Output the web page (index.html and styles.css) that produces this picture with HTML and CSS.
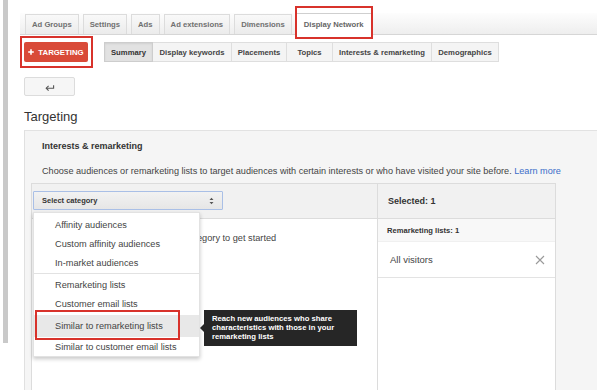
FILE: index.html
```html
<!DOCTYPE html>
<html>
<head>
<meta charset="utf-8">
<link rel="stylesheet" href="styles.css">
</head>
<body>
<div class="app">
  <div class="rail"></div>
  <div class="main">
    <div class="tabstrip">
      <div class="tab">Ad Groups</div>
      <div class="tab">Settings</div>
      <div class="tab">Ads</div>
      <div class="tab">Ad extensions</div>
      <div class="tab">Dimensions</div>
      <div class="tab active marked">Display Network</div>
    </div>
    <div class="toolbar">
      <div class="btn-target marked"><svg class="plus" width="6" height="6" viewBox="0 0 6 6"><path d="M3 0.2 V5.8 M0.2 3 H5.8" stroke="#fff" stroke-width="1.6"/></svg>TARGETING</div>
      <div class="subtabs">
        <div class="subtab active">Summary</div>
        <div class="subtab">Display keywords</div>
        <div class="subtab">Placements</div>
        <div class="subtab">Topics</div>
        <div class="subtab">Interests &amp; remarketing</div>
        <div class="subtab">Demographics</div>
      </div>
    </div>
    <div class="back-btn">
      <svg width="10" height="8" viewBox="0 0 10 8"><path d="M1.2 5.2 H8.6 V2.2" fill="none" stroke="#555" stroke-width="1.1"/><path d="M3.6 2.8 L1.2 5.2 L3.6 7.6" fill="none" stroke="#555" stroke-width="1.1"/></svg>
    </div>
    <h1 class="page-title">Targeting</h1>
    <div class="panel">
      <div class="panel-title">Interests &amp; remarketing</div>
      <div class="panel-desc">Choose audiences or remarketing lists to target audiences with certain interests or who have visited your site before. <span class="link">Learn more</span></div>
      <div class="picker">
        <div class="picker-left">
          <div class="col-head">
            <div class="select">
              <span>Select category</span>
              <svg width="5" height="8" viewBox="0 0 5 8"><path d="M0.5 3 L2.5 0.8 L4.5 3 Z M0.5 5 L2.5 7.2 L4.5 5 Z" fill="#555"/></svg>
            </div>
          </div>
          <div class="left-body">Select a category to get started</div>
          <div class="menu">
            <div class="menu-group">
              <div class="menu-item">Affinity audiences</div>
              <div class="menu-item">Custom affinity audiences</div>
              <div class="menu-item">In-market audiences</div>
            </div>
            <div class="menu-group">
              <div class="menu-item">Remarketing lists</div>
              <div class="menu-item">Customer email lists</div>
              <div class="menu-item hover marked">Similar to remarketing lists</div>
              <div class="menu-item">Similar to customer email lists</div>
            </div>
          </div>
          <div class="tooltip">Reach new audiences who share<br>characteristics with those in your<br>remarketing lists</div>
        </div>
        <div class="picker-right">
          <div class="col-head right-head">Selected: 1</div>
          <div class="group-row">Remarketing lists: 1</div>
          <div class="sel-row">
            <span>All visitors</span>
            <svg width="10" height="10" viewBox="0 0 10 10"><path d="M1 1 L9 9 M9 1 L1 9" stroke="#9a9a9a" stroke-width="1.1"/></svg>
          </div>
        </div>
      </div>
    </div>
  </div>
</div>
</body>
</html>
```

FILE: styles.css
```css
* { box-sizing: border-box; }
html, body { margin: 0; padding: 0; }
body {
  width: 600px;
  height: 390px;
  overflow: hidden;
  background: #fff;
  font-family: "Liberation Sans", Arial, sans-serif;
  color: #333;
}
.app { display: flex; height: 390px; }
.rail { flex: none; width: 5px; height: 343px; margin-left: 3px; background: #c9c9c9; }
.main { flex: 1; margin-left: 12px; margin-right: 3px; display: flex; flex-direction: column; }

.marked { position: relative; }
.marked::after {
  content: "";
  position: absolute;
  border: 2px solid #d8322b;
  pointer-events: none;
}

/* top tabs */
.tabstrip {
  margin-top: 13px;
  height: 22px;
  display: flex;
  align-items: flex-end;
  gap: 4px;
  padding-left: 5px;
  border-bottom: 1px solid #d6d6d6;
  background: linear-gradient(#fdfdfd, #eeeeee);
}
.tab {
  height: 20px;
  padding: 0 6px;
  display: flex;
  align-items: center;
  border: 1px solid #dcdcdc;
  border-bottom: none;
  background: linear-gradient(#f9f9f9, #ebebeb);
  font-size: 7.7px;
  font-weight: bold;
  color: #707070;
}
.tab.active {
  height: 22px;
  margin-bottom: -1px;
  padding: 0 7px;
  background: #fff;
  border-color: #cfcfcf;
  color: #666;
}
.tab.active::after { top: -8px; left: -2px; right: -2px; bottom: -4px; }

/* toolbar */
.toolbar { display: flex; align-items: center; margin-top: 7px; padding-left: 4px; height: 20px; }
.btn-target {
  width: 64px;
  height: 20px;
  display: flex;
  align-items: center;
  justify-content: center;
  background: #d94a38;
  border-radius: 2px;
  color: #fff;
  font-size: 7.8px;
  font-weight: bold;
}
.plus { margin-right: 4px; flex: none; }
.btn-target::after { top: -6px; left: -4px; right: -5px; bottom: -6px; }
.subtabs { display: flex; margin-left: 16px; }
.subtab {
  height: 20px;
  display: flex;
  align-items: center;
  justify-content: center;
  border: 1px solid #dedede;
  border-left: none;
  background: #f4f4f4;
  font-size: 7.7px;
  font-weight: bold;
  color: #444;
}
.subtab:nth-child(1) { width: 49px; border-left: 1px solid #d0d0d0; }
.subtab:nth-child(2) { width: 79px; }
.subtab:nth-child(3) { width: 55px; }
.subtab:nth-child(4) { width: 46px; }
.subtab:nth-child(5) { width: 99px; }
.subtab:nth-child(6) { width: 67px; }
.subtab.active { background: #e2e2e2; border-color: #cdcdcd; box-shadow: inset 0 1px 2px rgba(0,0,0,0.08); color: #333; }

.back-btn {
  margin-top: 15px;
  margin-left: 4px;
  width: 51px;
  height: 19px;
  display: flex;
  align-items: center;
  justify-content: center;
  border: 1px solid #dcdcdc;
  border-radius: 2px;
  background: #f6f6f6;
}

.page-title {
  margin: 13px 0 5px 4px;
  font-size: 13px;
  line-height: 16px;
  font-weight: normal;
  color: #333;
}

/* panel */
.panel {
  flex: 1;
  margin-left: 4px;
  border-top: 1px solid #e2e2e2;
  border-left: 1px solid #e0e0e0;
  background: #f5f5f5;
  display: flex;
  flex-direction: column;
}
.panel-title {
  margin: 10px 0 0 17px;
  font-size: 9px;
  line-height: 11px;
  font-weight: bold;
  color: #333;
}
.panel-desc {
  margin: 14px 0 0 17px;
  font-size: 9.15px;
  line-height: 11px;
  color: #444;
  white-space: nowrap;
}
.link { color: #3b6ec9; }

.picker {
  flex: 1;
  margin: 6px 0 0 6px;
  width: 525px;
  border: 1px solid #dcdcdc;
  border-bottom: none;
  background: #fff;
  display: flex;
}
.picker-left { flex: 1; position: relative; border-right: 1px solid #dcdcdc; }
.picker-right { width: 177px; flex: none; }
.col-head {
  height: 35px;
  background: #f1f1f1;
  border-bottom: 1px solid #dcdcdc;
}
.picker-left .col-head { padding: 7px 0 0 1px; }
.select {
  width: 190px;
  height: 19px;
  display: flex;
  align-items: center;
  justify-content: space-between;
  padding: 0 8px;
  border: 1px solid #a9bfe6;
  border-radius: 1px;
  background: linear-gradient(#f2f2f2, #e6e6e6);
  font-size: 7.5px;
  font-weight: bold;
  color: #333;
}
.left-body {
  padding: 14px 0 0 117px;
  font-size: 9.2px;
  line-height: 11px;
  color: #444;
}

/* dropdown */
.menu {
  position: absolute;
  left: 1px;
  top: 28px;
  width: 167px;
  background: #fff;
  border: 1px solid #e2e2e2;
  box-shadow: 0 2px 4px rgba(0,0,0,0.22);
}
.menu-group { padding: 2px 0 1px; }
.menu-group + .menu-group { border-top: 1px solid #e2e2e2; padding: 1px 0 0; }
.menu-item {
  height: 19px;
  display: flex;
  align-items: center;
  padding-left: 21px;
  font-size: 9.2px;
  color: #444;
}
.menu-item.hover { height: 22px; margin-top: 2px; background: #e8e8e8; }
.menu-item.hover::after { top: -5px; left: 1px; right: 19px; bottom: -3px; }

.tooltip {
  position: absolute;
  left: 172px;
  top: 126px;
  width: 153px;
  height: 36px;
  padding: 4px 8px;
  background: #262626;
  color: #fff;
  font-size: 7.7px;
  font-weight: bold;
  line-height: 9px;
  white-space: nowrap;
}
.tooltip::before {
  content: "";
  position: absolute;
  left: -4px;
  top: 14px;
  border-top: 4px solid transparent;
  border-bottom: 4px solid transparent;
  border-right: 4px solid #262626;
}

/* right column */
.right-head {
  display: flex;
  align-items: center;
  padding-left: 10px;
  font-size: 9px;
  font-weight: bold;
  color: #333;
}
.group-row {
  height: 22px;
  display: flex;
  align-items: center;
  padding-left: 9px;
  background: #f8f8f8;
  font-size: 7.6px;
  font-weight: bold;
  color: #333;
}
.sel-row {
  height: 37px;
  display: flex;
  align-items: center;
  justify-content: space-between;
  padding: 0 10px 0 12px;
  border-top: 1px solid #f0f0f0;
  border-bottom: 1px solid #e3e3e3;
  font-size: 9.5px;
  color: #444;
}
```
